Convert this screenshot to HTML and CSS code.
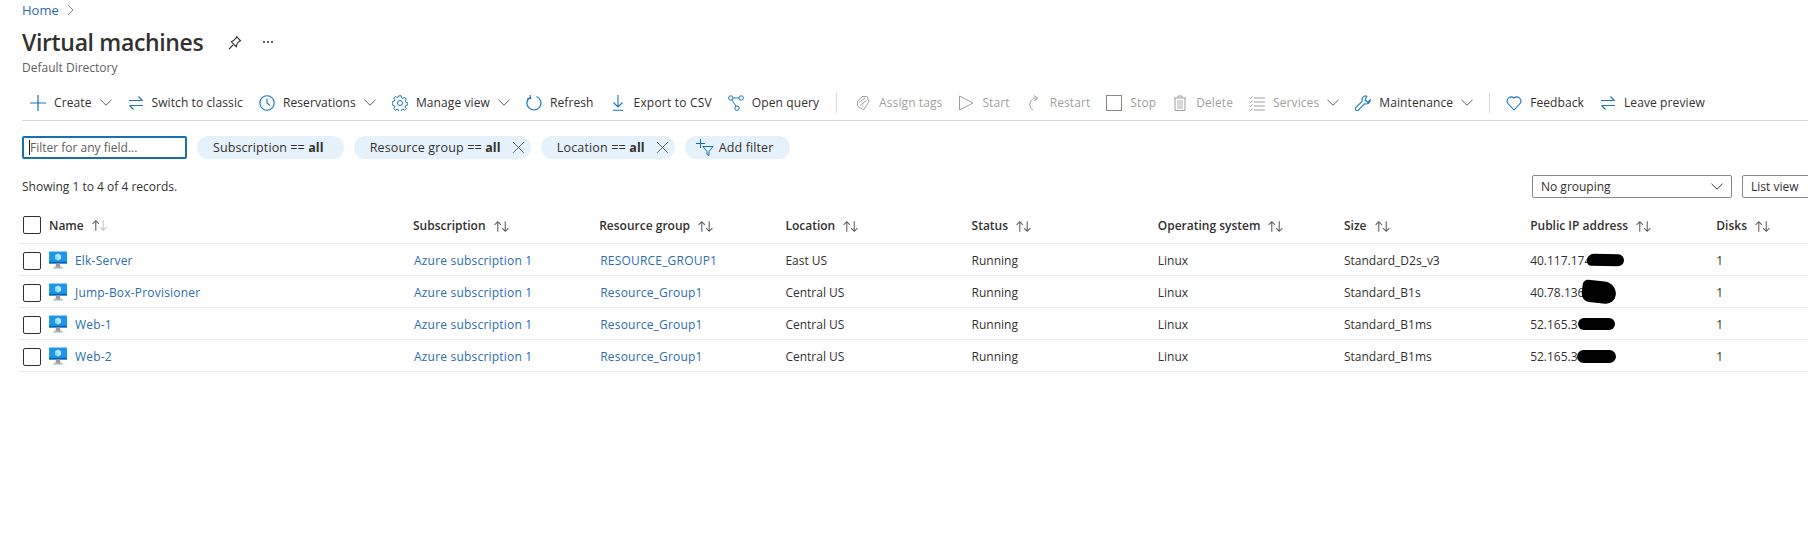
FILE: index.html
```html
<!DOCTYPE html>
<html lang="en">
<head>
    <meta charset="UTF-8">
    <meta name="viewport" content="width=device-width, initial-scale=1.0">
    <title>Virtual machines</title>
    <link rel="stylesheet" href="styles.css">
</head>
<body>
    <svg class="defs" width="0" height="0">
      <symbol id="chevron" viewBox="0 0 12 7"><path d="M.5.8 6 6.2 11.500.8" fill="none" stroke="currentColor"/></symbol>
      <symbol id="swap" viewBox="0 0 16 16"><path d="M1 5.500h13.500M10.500 1.500l4 4M1.500 10.500H15M1.500 10.500l4 4" fill="none" stroke="currentColor" stroke-width="1.200"/></symbol>
      <symbol id="sort" viewBox="0 0 16 12"><path d="M4.500 11V1.500M1.500 4.500l3-3 3 3" fill="none" stroke="#605e5c"/><path d="M11.500 1v9.500M8.500 7.500l3 3 3-3" fill="none" stroke="#605e5c"/></symbol>
      <symbol id="sort-up" viewBox="0 0 16 12"><path d="M4.500 11V1.500M1.500 4.500l3-3 3 3" fill="none" stroke="#605e5c"/><path d="M11.500 1v9.500M8.500 7.500l3 3 3-3" fill="none" stroke="#c8c6c4"/></symbol>
      <symbol id="close" viewBox="0 0 14 14"><path d="M1 1l12 12M13 1 1 13" fill="none" stroke="#605e5c"/></symbol>
      <symbol id="vm" viewBox="0 0 18 18">
        <rect x="0" y="0.500" width="18" height="12" rx="0.800" fill="#1d97ea"/>
        <rect x="0" y="10.800" width="18" height="1.700" fill="#0a5fa8"/>
        <path d="M9 2.500l3 1.700v3.500L9 9.500 6 7.700V4.200z" fill="#b5e8f8"/>
        <path d="M9 6v3.500L6 7.700V4.200z" fill="#8ad6f0"/>
        <path d="M7 12.500h4l.5 3.500h-5z" fill="#9b9b9b"/>
        <rect x="4.500" y="16" width="9" height="1.500" fill="#b5b5b5"/>
      </symbol>
    </svg>

    <nav class="crumbs">
      <a href="#">Home</a>
      <svg class="crumb-arrow" viewBox="0 0 7 12"><path d="M1 1l5 5-5 5" fill="none" stroke="#8a8886"/></svg>
    </nav>

    <header class="title-bar">
      <h1>Virtual machines</h1>
      <svg class="pin" viewBox="0 0 16 16"><path d="M1 15l4.500-4.500M3.500 7.200l5.300 5.300 1-3.500 3-3 1 .5-5-5 .5 1-3 3z" fill="none" stroke="#201f1e" stroke-width="1.100"/></svg>
      <span class="more"><i></i><i></i><i></i></span>
    </header>
    <p class="subtitle">Default Directory</p>

    <div class="toolbar">
      <button class="tool">
        <svg class="ico" viewBox="0 0 16 16"><path d="M8 0v16M0 8h16" stroke="currentColor" stroke-width="1.200"/></svg>
        <span>Create</span>
        <svg class="chev"><use href="#chevron"/></svg>
      </button>
      <button class="tool">
        <svg class="ico"><use href="#swap"/></svg>
        <span>Switch to classic</span>
      </button>
      <button class="tool">
        <svg class="ico" viewBox="0 0 16 16"><circle cx="8" cy="8" r="7.200" fill="none" stroke="currentColor" stroke-width="1.100"/><path d="M8 3.500V8l3 2.500" fill="none" stroke="currentColor" stroke-width="1.100"/></svg>
        <span>Reservations</span>
        <svg class="chev"><use href="#chevron"/></svg>
      </button>
      <button class="tool">
        <svg class="ico" viewBox="0 0 16 16"><circle cx="8" cy="8" r="2.500" fill="none" stroke="currentColor"/><path d="M6.800.8h2.400l.4 2 1.300.6 1.800-1 1.600 1.700-1 1.700.5 1.300 2 .5v2.400l-2 .4-.6 1.400 1.100 1.700-1.700 1.700-1.700-1.100-1.300.6-.4 2H6.800l-.4-2-1.300-.6-1.700 1.100-1.700-1.700 1.100-1.700-.6-1.300-2-.5V6.600l2-.4.6-1.400-1.100-1.700 1.700-1.700 1.700 1.100 1.300-.6z" fill="none" stroke="currentColor" stroke-width="1"/></svg>
        <span>Manage view</span>
        <svg class="chev"><use href="#chevron"/></svg>
      </button>
      <button class="tool">
        <svg class="ico" viewBox="0 0 16 16"><path d="M10.500 1.500A7 7 0 1 1 4.500 1.900" fill="none" stroke="currentColor" stroke-width="1.200"/><path d="M4 0l.7 3.500L1 4" fill="none" stroke="currentColor" stroke-width="1.100"/></svg>
        <span>Refresh</span>
      </button>
      <button class="tool export">
        <svg class="ico" viewBox="0 0 16 16"><path d="M8 0v11.500M3.500 7.500 8 12l4.500-4.500M3 15.300h10" fill="none" stroke="currentColor" stroke-width="1.100"/></svg>
        <span>Export to CSV</span>
      </button>
      <button class="tool">
        <svg class="ico" viewBox="0 0 16 16"><circle cx="2.800" cy="3" r="2.200" fill="none" stroke="currentColor"/><circle cx="13.200" cy="3" r="2.200" fill="none" stroke="currentColor"/><circle cx="9" cy="13.200" r="2.200" fill="none" stroke="currentColor"/><path d="M5 3h6M4 5l4 6.200" fill="none" stroke="currentColor"/></svg>
        <span>Open query</span>
      </button>
      <span class="sep sep-first"></span>
      <button class="tool off">
        <svg class="ico" viewBox="0 0 16 16"><path d="M2.500 6.500 7 1.500h5l2 5-5.500 8.500-6-4zM4 7.500l6-4.500M5 10.500l6.500-5" fill="none" stroke="currentColor"/></svg>
        <span>Assign tags</span>
      </button>
      <button class="tool off">
        <svg class="ico" viewBox="0 0 16 16"><path d="M1.500 1v14L15 8z" fill="none" stroke="currentColor"/></svg>
        <span>Start</span>
      </button>
      <button class="tool off">
        <svg class="ico" viewBox="0 0 16 16"><path d="M10 3a6.500 6.500 0 0 0-3 12" fill="none" stroke="currentColor"/><path d="M8 .5 11.500 3 8 6" fill="none" stroke="currentColor"/></svg>
        <span>Restart</span>
      </button>
      <button class="tool off">
        <svg class="ico" viewBox="0 0 16 16"><rect x="0.500" y="0.500" width="15" height="15" fill="none" stroke="#8a8886"/></svg>
        <span>Stop</span>
      </button>
      <button class="tool off">
        <svg class="ico" viewBox="0 0 16 16"><path d="M2 3h12M6 3V1h4v2M3 3v12.500h10V3" fill="none" stroke="currentColor"/><rect x="5" y="5" width="6" height="9" fill="#d8d8d8"/></svg>
        <span>Delete</span>
      </button>
      <button class="tool off">
        <svg class="ico" viewBox="0 0 16 16"><path d="M5 3h11M5 7h11M5 11h11M5 15h11M.5 2.500 1.500 3.500 3.500 1.500M.5 6.500 1.500 7.500 3.500 5.500M.5 10.500 1.500 11.500 3.500 9.500M.5 14.500 1.500 15.500 3.500 13.500" fill="none" stroke="currentColor"/></svg>
        <span>Services</span>
        <svg class="chev"><use href="#chevron"/></svg>
      </button>
      <button class="tool">
        <svg class="ico" viewBox="0 0 16 16"><path d="M11 .7a4 4 0 0 0-3.700 5.500L.8 12.700a1.700 1.700 0 0 0 2.500 2.500l6.500-6.500A4 4 0 0 0 15.300 5L12.700 7.200 10 5l1.800-3.700z" fill="none" stroke="currentColor" stroke-width="1.100"/></svg>
        <span>Maintenance</span>
        <svg class="chev"><use href="#chevron"/></svg>
      </button>
      <span class="sep"></span>
      <button class="tool">
        <svg class="ico" viewBox="0 0 16 16"><path d="M8 15 1.500 8A4.200 4.200 0 0 1 8 3a4.200 4.200 0 0 1 6.500 5z" fill="none" stroke="currentColor" stroke-width="1.100"/></svg>
        <span>Feedback</span>
      </button>
      <button class="tool">
        <svg class="ico"><use href="#swap"/></svg>
        <span>Leave preview</span>
      </button>
    </div>

    <div class="filters">
      <div class="search"><span class="caret"></span>Filter for any field...</div>
      <div class="pill"><span>Subscription == <b>all</b></span></div>
      <div class="pill closable"><span>Resource group == <b>all</b></span><svg class="pill-x"><use href="#close"/></svg></div>
      <div class="pill closable"><span>Location == <b>all</b></span><svg class="pill-x"><use href="#close"/></svg></div>
      <div class="pill add">
        <svg class="add-ico" viewBox="0 0 18 18"><path d="M4.500 0v9M0 4.500h9" stroke="#0f6cbd" fill="none"/><path d="M7 7.500h10l-4 5v4l-2-1v-3z" stroke="#0f6cbd" fill="none"/></svg>
        <span>Add filter</span>
      </div>
    </div>

    <div class="summary">
      <span>Showing 1 to 4 of 4 records.</span>
      <div class="views">
        <div class="select grouping">No grouping<svg class="chev dark"><use href="#chevron"/></svg></div>
        <div class="select listview">List view</div>
      </div>
    </div>

    <table class="vm-table">
      <colgroup>
        <col class="c-name"><col class="c"><col class="c"><col class="c"><col class="c"><col class="c"><col class="c"><col class="c"><col class="c-last">
      </colgroup>
      <thead>
        <tr>
          <th><div class="name-cell"><span class="check"></span><span class="th-name">Name</span><svg class="sort"><use href="#sort-up"/></svg></div></th>
          <th>Subscription<svg class="sort"><use href="#sort"/></svg></th>
          <th>Resource group<svg class="sort"><use href="#sort"/></svg></th>
          <th>Location<svg class="sort"><use href="#sort"/></svg></th>
          <th>Status<svg class="sort"><use href="#sort"/></svg></th>
          <th>Operating system<svg class="sort"><use href="#sort"/></svg></th>
          <th>Size<svg class="sort"><use href="#sort"/></svg></th>
          <th>Public IP address<svg class="sort"><use href="#sort"/></svg></th>
          <th>Disks<svg class="sort"><use href="#sort"/></svg></th>
        </tr>
      </thead>
      <tbody>
        <tr>
          <td><div class="name-cell"><span class="check"></span><svg class="vm"><use href="#vm"/></svg><a href="#">Elk-Server</a></div></td>
          <td><a href="#">Azure subscription 1</a></td>
          <td><a href="#">RESOURCE_GROUP1</a></td>
          <td>East US</td>
          <td>Running</td>
          <td>Linux</td>
          <td>Standard_D2s_v3</td>
          <td class="ip">40.117.174<span class="blob blob-1"></span></td>
          <td>1</td>
        </tr>
        <tr>
          <td><div class="name-cell"><span class="check"></span><svg class="vm"><use href="#vm"/></svg><a href="#">Jump-Box-Provisioner</a></div></td>
          <td><a href="#">Azure subscription 1</a></td>
          <td><a href="#">Resource_Group1</a></td>
          <td>Central US</td>
          <td>Running</td>
          <td>Linux</td>
          <td>Standard_B1s</td>
          <td class="ip">40.78.136<span class="blob blob-2"></span></td>
          <td>1</td>
        </tr>
        <tr>
          <td><div class="name-cell"><span class="check"></span><svg class="vm"><use href="#vm"/></svg><a href="#">Web-1</a></div></td>
          <td><a href="#">Azure subscription 1</a></td>
          <td><a href="#">Resource_Group1</a></td>
          <td>Central US</td>
          <td>Running</td>
          <td>Linux</td>
          <td>Standard_B1ms</td>
          <td class="ip">52.165.3<span class="blob blob-3"></span></td>
          <td>1</td>
        </tr>
        <tr>
          <td><div class="name-cell"><span class="check"></span><svg class="vm"><use href="#vm"/></svg><a href="#">Web-2</a></div></td>
          <td><a href="#">Azure subscription 1</a></td>
          <td><a href="#">Resource_Group1</a></td>
          <td>Central US</td>
          <td>Running</td>
          <td>Linux</td>
          <td>Standard_B1ms</td>
          <td class="ip">52.165.3<span class="blob blob-4"></span></td>
          <td>1</td>
        </tr>
      </tbody>
    </table>
</body>
</html>
```

FILE: styles.css
```css
html, body {
  height: 100%;
}
body {
  margin: 0;
  overflow: hidden;
  background-color: #fff;
  color: #323130;
  font-family: "Open Sans", "Noto Sans", sans-serif;
  font-size: 12px;
}
a {
  color: #2b6cb0;
  text-decoration: none;
}
.defs {
  position: absolute;
}

/* top of the page */
.crumbs {
  display: flex;
  align-items: center;
  gap: 8px;
  height: 20px;
  padding-left: 22px;
  font-size: 13px;
}
.crumb-arrow {
  width: 7px;
  height: 12px;
}
.title-bar {
  display: flex;
  align-items: center;
  height: 30px;
  margin-top: 7px;
  padding-left: 22px;
}
h1 {
  margin: 0;
  font-size: 23px;
  font-weight: 600;
  color: #323130;
  letter-spacing: -0.35px;
}
.pin {
  width: 15px;
  height: 15px;
  margin-left: 25px;
}
.more {
  display: flex;
  gap: 2px;
  margin-left: 20px;
}
.more i {
  width: 2px;
  height: 2px;
  background-color: #605e5c;
}
.subtitle {
  margin: 3px 0 0 22px;
  height: 16px;
  line-height: 16px;
  color: #605e5c;
}

/* toolbar */
.toolbar {
  display: flex;
  align-items: center;
  gap: 16px;
  height: 35px;
  margin: 9px 0 0 22px;
  padding-left: 8px;
  border-bottom: 1px solid #d6d6d6;
}
.tool {
  display: flex;
  align-items: center;
  gap: 8px;
  padding: 0;
  border: 0;
  background: none;
  color: #323130;
  font: inherit;
  letter-spacing: 0.1px;
  white-space: nowrap;
}
.export {
  letter-spacing: 0.2px;
}
.ico {
  width: 16px;
  height: 16px;
  color: #1a75bc;
  flex: none;
}
.chev {
  width: 12px;
  height: 7px;
  color: #605e5c;
  flex: none;
}
.tool.off {
  color: #a19f9d;
}
.tool.off .ico {
  color: #a19f9d;
}
.sep {
  width: 1px;
  height: 20px;
  background-color: #d6d6d6;
}
.sep-first {
  margin: 0 2px 0 1px;
}

/* filter row */
.filters {
  display: flex;
  align-items: center;
  gap: 10px;
  margin: 15px 0 0 22px;
}
.search {
  display: flex;
  align-items: center;
  box-sizing: border-box;
  width: 165px;
  height: 23px;
  padding-left: 5px;
  border: 2px solid #1a6fae;
  border-radius: 2px;
  color: #605e5c;
}
.caret {
  width: 1px;
  height: 15px;
  background-color: #201f1e;
}
.pill {
  display: flex;
  align-items: center;
  height: 23px;
  padding: 0 20px 0 16px;
  border-radius: 12px;
  background-color: #e6f2fb;
  font-size: 12.5px;
  letter-spacing: 0.1px;
  white-space: nowrap;
}
.pill b {
  font-weight: 700;
}
.pill.closable {
  padding-right: 6px;
  letter-spacing: 0.15px;
}
.pill-x {
  width: 13px;
  height: 13px;
  margin-left: 11px;
}
.pill.add {
  gap: 5px;
  padding: 0 17px 0 11px;
}
.add-ico {
  width: 18px;
  height: 18px;
}

/* records line */
.summary {
  display: flex;
  align-items: center;
  justify-content: space-between;
  height: 23px;
  margin: 16px 0 0 22px;
}
.views {
  display: flex;
  gap: 10px;
  width: 276px;
  flex: none;
}
.select {
  display: flex;
  align-items: center;
  box-sizing: border-box;
  height: 23px;
  padding: 0 8px;
  border: 1px solid #8a8886;
  border-radius: 2px;
  flex: none;
}
.grouping {
  justify-content: space-between;
  width: 200px;
}
.listview {
  width: 80px;
}
.chev.dark {
  color: #323130;
}

/* virtual machine list */
.vm-table {
  table-layout: fixed;
  width: 2000px;
  margin: 8px 0 0 19px;
  border-collapse: collapse;
}
.c-name {
  width: 394px;
}
.c {
  width: 186.200px;
}
th, td {
  box-sizing: border-box;
  height: 32px;
  padding: 3px 0 0;
  border-bottom: 1px solid #edebe9;
  text-align: left;
  white-space: nowrap;
}
th {
  height: 37px;
  padding: 2px 0 0;
  font-weight: 600;
}
.name-cell {
  display: flex;
  align-items: center;
  padding-left: 4px;
}
.check {
  box-sizing: border-box;
  width: 18px;
  height: 18px;
  border: 1px solid #323130;
  border-radius: 2px;
  flex: none;
}
.th-name {
  margin-left: 8px;
}
.sort {
  width: 17px;
  height: 13px;
  margin-left: 7px;
  vertical-align: -3px;
}
.vm {
  width: 18px;
  height: 18px;
  margin: -2px 8px 0 8px;
  flex: none;
}
td a {
  margin-left: 1px;
  letter-spacing: 0.2px;
}
.name-cell a {
  margin-left: 0;
}
.ip {
  position: relative;
}
.blob {
  position: absolute;
  background-color: #000;
}
.blob-1 {
  left: 57px;
  top: 10px;
  width: 37px;
  height: 12px;
  border-radius: 8px 7px 7px 5px;
  transform: rotate(1deg);
}
.blob-2 {
  left: 52px;
  top: 5px;
  width: 34px;
  height: 22px;
  border-radius: 6px 14px 11px 9px;
  transform: rotate(6deg);
}
.blob-3 {
  left: 48px;
  top: 10px;
  width: 37px;
  height: 12px;
  border-radius: 6px;
}
.blob-4 {
  left: 47px;
  top: 10px;
  width: 39px;
  height: 13px;
  border-radius: 7px;
}
```
